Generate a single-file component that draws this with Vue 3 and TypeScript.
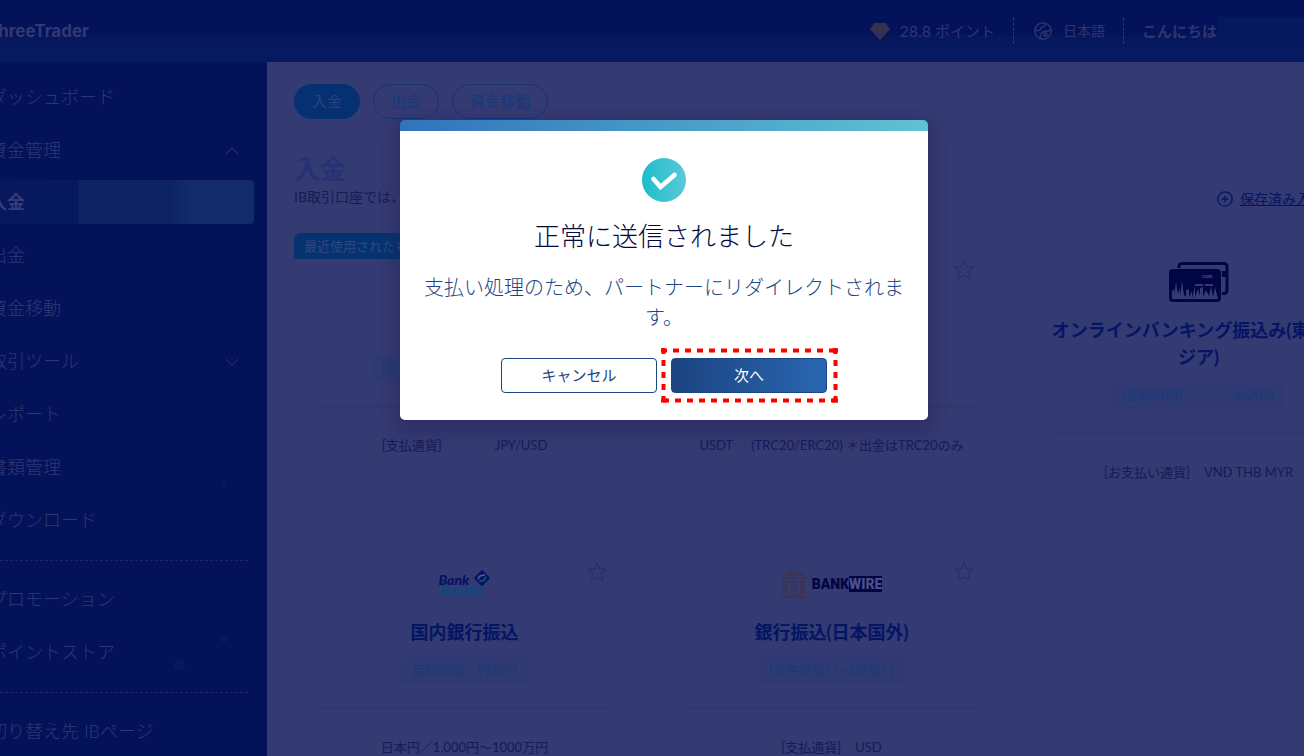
<script setup lang="ts">
interface MenuItem {
  label: string
  chevron?: 'up' | 'down'
  children?: { label: string; active?: boolean }[]
}

interface Method {
  id: string
  logo?: 'card' | 'transfer' | 'wire'
  title?: string[]
  tag?: string[]
  wideTag?: boolean
  detail: string[]
  gap: 'roomy' | 'medium' | 'narrow'
  badge?: string
  star?: boolean
}

const menuGroups: MenuItem[][] = [
  [
    { label: 'ダッシュボード' },
    {
      label: '資金管理',
      chevron: 'up',
      children: [{ label: '入金', active: true }, { label: '出金' }, { label: '資金移動' }],
    },
    { label: '取引ツール', chevron: 'down' },
    { label: 'レポート' },
    { label: '書類管理' },
    { label: 'ダウンロード' },
  ],
  [{ label: 'プロモーション' }, { label: 'ポイントストア' }],
  [{ label: '切り替え先 IBページ' }],
]

const tabs = ['入金', '出金', '資金移動']

const methods: Method[] = [
  { id: 'recent', tag: ['[反映時間]'], wideTag: true, detail: ['[支払通貨]', 'JPY/USD'], gap: 'roomy', badge: '最近使用されたも' },
  { id: 'usdt', detail: ['USDT', '(TRC20/ERC20) ＊出金はTRC20のみ'], gap: 'medium', star: true },
  {
    id: 'asia',
    logo: 'card',
    title: ['オンラインバンキング振込み(東南ア', 'ジア)'],
    tag: ['[反映時間]', '約20分'],
    detail: ['[お支払い通貨]', 'VND THB MYR'],
    gap: 'narrow',
  },
  { id: 'domestic', logo: 'transfer', title: ['国内銀行振込'], tag: ['反映時間　約20分'], detail: ['日本円／1,000円～1000万円'], gap: 'narrow', star: true },
  { id: 'overseas', logo: 'wire', title: ['銀行振込(日本国外)'], tag: ['[反映時間] 1~3営業日'], detail: ['[支払通貨]', 'USD'], gap: 'narrow', star: true },
]
</script>

<template>
  <div class="page">
    <header class="topbar">
      <div class="brand"><span>ThreeTrader</span></div>
      <div class="tools">
        <span class="points">
          <svg width="20" height="17" viewBox="0 0 20 17" aria-hidden="true">
            <path d="M4 0H16L20 6.500L10 17L0 6.500Z" fill="#38314d" />
            <path d="M6 8.500L10 12L14 8.500" fill="none" stroke="#25306f" stroke-width="1.500" />
          </svg>
          <span><span class="amount">28.8</span> ポイント</span>
        </span>
        <button class="lang" type="button">
          <svg width="18" height="18" viewBox="0 0 18 18" fill="none" stroke="currentColor" stroke-width="1.400" aria-hidden="true">
            <circle cx="9" cy="9" r="8.200" />
            <path d="M1 8C4 9 6.500 8.500 7 6.500C7.500 4.500 9 5.500 10.500 4.500C11.500 3.800 11.500 2.500 11 1.200" />
            <path d="M6.500 16.500C5.500 13.500 7 10.500 10 9.500C12 8.800 14.500 9.800 17 8" />
            <circle cx="11.500" cy="12.500" r="1.500" />
          </svg>
          日本語
        </button>
        <span class="hello">こんにちは</span>
        <span class="account"></span>
      </div>
    </header>

    <div class="body">
      <nav class="sidebar">
        <ul v-for="(group, g) in menuGroups" :key="g" class="group">
          <li v-for="item in group" :key="item.label">
            <a class="row" href="#">
              <span>{{ item.label }}</span>
              <svg v-if="item.chevron" width="14" height="12" viewBox="0 0 14 12" fill="none" stroke="currentColor" aria-hidden="true">
                <path :d="item.chevron === 'up' ? 'M1 11L7 5L13 11' : 'M1 5L7 11L13 5'" />
              </svg>
            </a>
            <ul v-if="item.children" class="sub">
              <li v-for="child in item.children" :key="child.label">
                <a class="row" :class="{ active: child.active }" href="#"><span>{{ child.label }}</span></a>
              </li>
            </ul>
          </li>
        </ul>
      </nav>

      <main class="content">
        <div class="tabs">
          <button v-for="(tab, i) in tabs" :key="tab" type="button" class="tab" :class="{ on: i === 0 }">{{ tab }}</button>
        </div>
        <div class="wide">
          <div class="intro">
            <div>
              <h1>入金</h1>
              <p>IB取引口座では、</p>
            </div>
            <a class="saved" href="#">
              <svg width="16" height="16" viewBox="0 0 16 16" fill="none" stroke="currentColor" stroke-width="1.300" aria-hidden="true">
                <circle cx="8" cy="8" r="7.200" />
                <path d="M8 4.800V11.200M4.800 8H11.200" />
              </svg>
              <span>保存済み入金</span>
            </a>
          </div>

          <div class="cards">
            <section v-for="m in methods" :key="m.id" class="card">
              <span v-if="m.badge" class="badge">{{ m.badge }}</span>
              <button v-if="m.star" class="star" type="button" aria-label="お気に入り">
                <svg width="20" height="20" viewBox="0 0 20 20" fill="none" stroke="currentColor" stroke-width="1.300" stroke-linejoin="round" aria-hidden="true">
                  <path d="M10 1L12.700 6.700L19 7.500L14.400 11.900L15.600 18.200L10 15.200L4.400 18.200L5.600 11.900L1 7.500L7.300 6.700Z" />
                </svg>
              </button>

              <div class="logo">
                <svg v-if="m.logo === 'card'" width="60" height="41" viewBox="0 0 60 41" aria-hidden="true">
                  <rect x="10" y="1.500" width="48" height="30" rx="3" fill="none" stroke="#020543" stroke-width="3" />
                  <rect x="50" y="9" width="9" height="6" fill="#020543" />
                  <rect x="-1" y="6" width="54" height="36" rx="4" fill="#343a72" />
                  <rect x="0" y="7" width="52" height="33" rx="4" fill="#020543" />
                  <path d="M3 37V29L5 27V33L7 20L9 32L11 26V34L13 19L15 33L17 35V28L20 27V35L23 29V36L26 24V35L29 27L31 34V26L34 25V35L37 28L40 34L42 24L44 35L46 25L49 37Z" fill="#343a72" />
                  <path d="M26 23H34M36 23H44" stroke="#343a72" stroke-width="2" />
                  <text x="33" y="16" font-family="Roboto" font-size="4" font-weight="700" fill="#4a508a">CARD</text>
                </svg>
                <div v-else-if="m.logo === 'transfer'" class="transfer">
                  <span class="bank">Bank</span><span class="tr">Transfer</span>
                  <svg width="18" height="18" viewBox="0 0 18 18" aria-hidden="true">
                    <rect x="3.200" y="3.200" width="11.600" height="11.600" rx="1.500" transform="rotate(45 9 9)" fill="#041263" />
                    <path d="M5.500 10.500C5 7.500 7 6.200 12 6.200" fill="none" stroke="#4a5b90" stroke-width="1.800" />
                    <path d="M12.500 7.500C13 10.800 11 12 6.500 12" fill="none" stroke="#15507f" stroke-width="1.800" />
                  </svg>
                </div>
                <div v-else-if="m.logo === 'wire'" class="wire">
                  <svg width="26" height="28" viewBox="0 0 26 28" fill="#3a3557" aria-hidden="true">
                    <path d="M13 0L25 6H1Z" />
                    <path d="M0 7H26V9H0ZM2 10H7V23H2ZM19 10H24V23H19ZM1 24H25V25H1ZM0 26H26V28H0Z" />
                    <path d="M17 12.500C15 10 9 10.500 9.500 13.500C10 17 16.500 16 16.500 19.500C16.500 22.500 10.500 22.500 9 20M13 9.500V23.500" fill="none" stroke="#3a3557" stroke-width="1.600" />
                  </svg>
                  <b>BANK<i>WIRE</i></b>
                </div>
              </div>

              <h2>
                <template v-if="m.title"><span v-for="line in m.title" :key="line">{{ line }}</span></template>
              </h2>
              <div class="tagline">
                <span v-if="m.tag" class="tag" :class="{ stretch: m.wideTag }"><span v-for="t in m.tag" :key="t">{{ t }}</span></span>
              </div>
              <div class="detail" :class="m.gap"><span v-for="d in m.detail" :key="d">{{ d }}</span></div>
            </section>
          </div>
        </div>
      </main>
    </div>

    <div class="layer">
      <div class="dialog" role="dialog" aria-labelledby="dialog-title">
        <svg class="check" width="44" height="44" viewBox="0 0 44 44" aria-hidden="true">
          <defs>
            <linearGradient id="mark" x1="0" x2="1"><stop offset="0" stop-color="#1dbdca" /><stop offset="1" stop-color="#5bc8da" /></linearGradient>
          </defs>
          <circle cx="22" cy="22" r="22" fill="url(#mark)" />
          <path d="M11.500 21L18.500 29L32.500 17" fill="none" stroke="#fff" stroke-width="4.600" stroke-linecap="round" />
        </svg>
        <h3 id="dialog-title">正常に送信されました</h3>
        <p>支払い処理のため、パートナーにリダイレクトされます。</p>
        <div class="actions">
          <button type="button" class="btn">キャンセル</button>
          <div class="marked">
            <button type="button" class="btn primary">次へ</button>
            <svg class="frame" width="177" height="55" viewBox="0 0 177 55" fill="none" stroke="#ff0000" stroke-width="4" stroke-dasharray="6" aria-hidden="true">
              <path d="M0 2.500H177" />
              <path d="M2 52.500H177" />
              <path d="M2.500 0V55" />
              <path d="M174.500 0V55" />
              <path d="M171 2.500H177M171 52.500H177M0 52.500H6" stroke-dasharray="none" />
            </svg>
          </div>
        </div>
      </div>
    </div>
  </div>
</template>

<style>
body {
  margin: 0;
  background: #343a72;
}
</style>

<style scoped>
.page {
  position: relative;
  height: 100vh;
  display: flex;
  flex-direction: column;
  overflow: hidden;
  background: #343a72;
  font-family: Lato, "Noto Sans CJK JP", sans-serif;
  font-weight: 400;
}
ul {
  list-style: none;
  margin: 0;
  padding: 0;
}
h1, h2, h3, p {
  margin: 0;
}
button {
  font: inherit;
  cursor: pointer;
}
a {
  color: inherit;
  text-decoration: none;
}

.topbar {
  flex: none;
  height: 62px;
  display: flex;
  align-items: center;
  justify-content: space-between;
  background: linear-gradient(#041259 0 35px, #06175d 35px 44px, #061a61 50px);
  color: #2e3672;
}
.brand {
  width: 89px;
  display: flex;
  justify-content: flex-end;
  font: 700 17px/24px Inter, sans-serif;
  color: #323974;
}
.tools {
  display: flex;
  align-items: center;
  font-size: 15px;
  line-height: 26px;
}
.points {
  display: flex;
  align-items: center;
  gap: 10px;
  padding-right: 18px;
  border-right: 1px dashed #2e3672;
}
.amount {
  font-size: 16px;
}
.lang {
  display: flex;
  align-items: center;
  gap: 11px;
  padding: 0 18px 0 20px;
  border: 0;
  border-right: 1px dashed #2e3672;
  background: none;
  color: #2e3672;
  font-size: 14px;
  line-height: 26px;
}
.hello {
  padding: 0 1px 0 18px;
  font-weight: 700;
}
.account {
  width: 86px;
  height: 28px;
  background: #05195f;
}

.body {
  flex: 1;
  display: flex;
  min-height: 0;
}
.sidebar {
  flex: none;
  width: 254px;
  padding: 13px 13px 0 0;
  background:
    radial-gradient(circle at 224px 421px, #07195e 3px, transparent 4px),
    radial-gradient(circle at 224px 577px, #07195e 3px, transparent 4px),
    radial-gradient(circle at 179px 603px, #07195e 5px, transparent 6px),
    #041259;
  color: #303874;
  font-size: 18px;
  font-weight: 300;
}
.group,
.sub {
  display: flex;
  flex-direction: column;
  gap: 9px;
}
.group + .group {
  margin: 18px 4px 0 0;
  padding-top: 17px;
  background: linear-gradient(90deg, #1d276a 60%, transparent 0) 0 0 / 5px 1px repeat-x;
}
.sub {
  margin-top: 8px;
}
.row {
  box-sizing: border-box;
  display: flex;
  align-items: center;
  justify-content: space-between;
  height: 44px;
  padding: 0 15px 2px 0;
  border-radius: 0 4px 4px 0;
}
.row span {
  margin-left: -11px;
  white-space: nowrap;
}
.row.active {
  background: linear-gradient(90deg, #06175d 0, #061a61 78px, #0d2363 79px, #0d2363 168px, #112c68 190px);
  color: #353c76;
  font-weight: 700;
}

.content {
  flex: 1;
  min-width: 0;
  padding: 22px 0 0 27px;
  overflow: hidden;
}
.tabs {
  display: flex;
  gap: 13px;
}
.tab {
  height: 35px;
  padding: 0 17px 2px;
  border: 1px solid #15347a;
  border-radius: 18px;
  background: none;
  color: #15397a;
  font-size: 15px;
}
.tab.on {
  border-color: #053172;
  background: #053172;
  color: #2b4180;
}
.wide {
  margin-right: -65px;
}
.intro {
  display: flex;
  justify-content: space-between;
  align-items: flex-end;
  margin: 32px 0 26px;
}
h1 {
  font-size: 26px;
  line-height: 36px;
  font-weight: 700;
  color: #263273;
}
.intro p {
  font-size: 14px;
  line-height: 20px;
  color: #161b59;
}
.saved {
  display: flex;
  align-items: center;
  gap: 7px;
  width: 152px;
  font-size: 14px;
  line-height: 14px;
  color: #041563;
  white-space: nowrap;
}
.saved span {
  text-decoration: underline;
}
.cards {
  display: grid;
  grid-template-columns: repeat(3, minmax(0, 1fr));
  grid-auto-rows: 276px;
  gap: 26px;
}
.card {
  position: relative;
  padding: 24px 26px 0;
}
.badge {
  position: absolute;
  left: 0;
  top: 0;
  padding: 0 10px;
  border-radius: 7px 0 0 0;
  background: #06336f;
  color: #2f4684;
  font-size: 13px;
  line-height: 26px;
}
.star {
  position: absolute;
  right: 28px;
  top: 27px;
  padding: 0;
  border: 0;
  background: none;
  color: #292f69;
  line-height: 0;
}
.logo {
  height: 50px;
  display: flex;
  align-items: center;
  justify-content: center;
}
h2 {
  display: flex;
  flex-direction: column;
  align-items: center;
  min-height: 27px;
  margin-top: 10px;
  font-size: 18px;
  line-height: 27px;
  font-weight: 700;
  color: #041563;
  white-space: nowrap;
}
.tagline {
  display: flex;
  justify-content: center;
  height: 25px;
  margin-top: 12px;
}
.tag {
  box-sizing: border-box;
  display: flex;
  gap: 52px;
  padding: 0 9px;
  border: 1px solid #2b3a76;
  border-radius: 2px;
  background: #303972;
  color: #173c78;
  font-size: 13px;
  line-height: 23px;
}
.tag.stretch {
  width: 187px;
}
.detail {
  display: flex;
  justify-content: center;
  margin-top: 25px;
  padding-top: 28px;
  border-top: 1px solid #2d336a;
  font-size: 13px;
  line-height: 20px;
  color: #161b59;
  white-space: nowrap;
}
.detail.roomy {
  gap: 53px;
}
.detail.medium {
  gap: 18px;
}
.detail.narrow {
  gap: 14px;
}
.transfer {
  position: relative;
  display: flex;
  flex-direction: column;
  width: 52px;
  font: italic 900 13px/10px Lato, sans-serif;
}
.bank {
  margin-top: 2px;
  font-size: 14px;
  color: #041263;
}
.tr {
  color: #0e4a80;
}
.transfer svg {
  position: absolute;
  right: 0;
  top: -4px;
}
.wire {
  display: flex;
  align-items: center;
  gap: 5px;
}
.wire b {
  font: 900 14px/16px Roboto, sans-serif;
  color: #020543;
}
.wire i {
  display: inline-block;
  background: #020543;
  color: #4a508a;
  font-style: normal;
}

.layer {
  position: absolute;
  inset: 0;
  display: flex;
  justify-content: center;
  align-items: flex-start;
  padding: 120px 0 0 24px;
}
.dialog {
  box-sizing: border-box;
  width: 528px;
  padding: 38px 24px 27px;
  border-radius: 5px;
  background: linear-gradient(90deg, #3173bb, #5fc2d2) 0 0 / 100% 11px no-repeat #fff;
  box-shadow: 0 7px 12px 8px rgba(38, 34, 84, 0.3);
  text-align: center;
}
.check {
  display: block;
  margin: 0 auto;
}
h3 {
  margin-top: 14px;
  font-size: 26px;
  line-height: 40px;
  font-weight: 300;
  color: #020a3c;
}
.dialog p {
  margin-top: 16px;
  font-size: 20px;
  line-height: 30px;
  font-weight: 300;
  color: #1c4583;
}
.actions {
  display: flex;
  justify-content: center;
  gap: 14px;
  margin-top: 26px;
}
.btn {
  display: block;
  width: 156px;
  height: 35px;
  padding: 0 0 2px;
  border: 1px solid #1c4583;
  border-radius: 4px;
  background: #fff;
  color: #1c4583;
  font-size: 15px;
}
.btn.primary {
  background: linear-gradient(90deg, #1c4480, #2966b2);
  color: #fff;
}
.marked {
  position: relative;
}
.frame {
  position: absolute;
  left: -10px;
  top: -10px;
  pointer-events: none;
}
</style>
